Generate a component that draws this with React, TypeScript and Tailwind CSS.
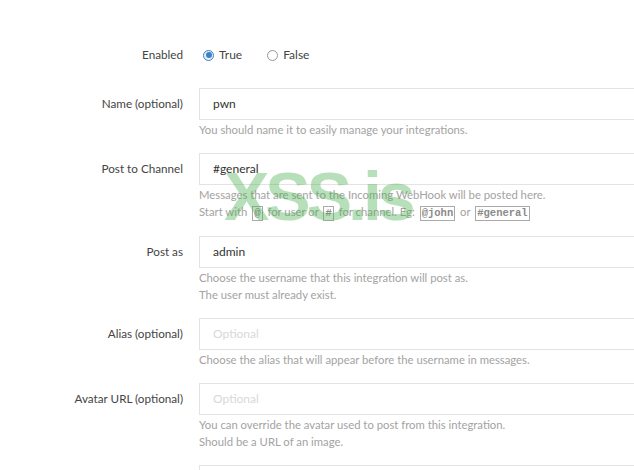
import React from 'react'

const font = { fontFamily: 'Lato, "Noto Sans", sans-serif' }

const Code = ({ children }: { children: React.ReactNode }) => (
    <code className="mx-[2px] inline-block border border-[#aaa] px-[1px] align-middle text-[10.5px] leading-[13px] font-bold text-[#8a8a8a] font-['Liberation_Mono',monospace]">
        {children}
    </code>
)

const Row = ({ label, children }: { label: string; children: React.ReactNode }) => (
    <div className="flex">
        <div className="w-[183px] shrink-0 pt-[6px] text-right text-[11.7px] leading-[18px] text-[#444]">{label}</div>
        <div className="ml-[16px] w-[480px] shrink-0">{children}</div>
    </div>
)

const Input = ({ value, placeholder }: { value?: string; placeholder?: string }) => (
    <div className="flex h-[32px] items-center border border-[#e3e3e3] bg-white pl-[13px] text-[12px]">
        {value ? <span className="text-[#333]">{value}</span> : <span className="text-[#d8d8d8]">{placeholder}</span>}
    </div>
)

const Help = ({ children }: { children: React.ReactNode }) => (
    <div className="mt-[1px] text-[11.3px] leading-[17px] text-[#a3a3a3]">{children}</div>
)

const Radio = ({ checked, label }: { checked?: boolean; label: string }) => (
    <label className="flex items-center gap-[5px] text-[12px] text-[#444]">
        <span
            className={`flex h-[11px] w-[11px] items-center justify-center rounded-full border ${checked ? 'border-[#3d7fc4] bg-[#e8f0fa]' : 'border-[#999]'}`}
        >
            {checked ? <span className="h-[6px] w-[6px] rounded-full bg-[#3d7fc4]" /> : null}
        </span>
        {label}
    </label>
)

export default function App() {
    return (
        <div className="relative h-[470px] w-[634px] overflow-hidden bg-white" style={font}>
            <div className="pt-[45px]">
                <div className="flex h-[20px] items-center">
                    <div className="w-[183px] text-right text-[11.7px] text-[#444]">Enabled</div>
                    <div className="ml-[20px] flex gap-[25px]">
                        <Radio checked label="True" />
                        <Radio label="False" />
                    </div>
                </div>

                <div className="mt-[23px] flex flex-col gap-[15px]">
                    <Row label="Name (optional)">
                        <Input value="pwn" />
                        <Help>You should name it to easily manage your integrations.</Help>
                    </Row>

                    <Row label="Post to Channel">
                        <Input value="#general" />
                        <Help>
                            Messages that are sent to the Incoming WebHook will be posted here.
                            <br />
                            Start with <Code>@</Code> for user or <Code>#</Code> for channel. Eg: <Code>@john</Code> or <Code>#general</Code>
                        </Help>
                    </Row>

                    <Row label="Post as">
                        <Input value="admin" />
                        <Help>
                            Choose the username that this integration will post as.
                            <br />
                            The user must already exist.
                        </Help>
                    </Row>

                    <Row label="Alias (optional)">
                        <Input placeholder="Optional" />
                        <Help>Choose the alias that will appear before the username in messages.</Help>
                    </Row>

                    <Row label="Avatar URL (optional)">
                        <Input placeholder="Optional" />
                        <Help>
                            You can override the avatar used to post from this integration.
                            <br />
                            Should be a URL of an image.
                        </Help>
                    </Row>

                    <Row label="">
                        <Input />
                    </Row>
                </div>
            </div>

            {/* watermark */}
            <div className="pointer-events-none absolute left-[224px] top-[156px] text-[68px] leading-[80px] font-bold tracking-[-4px] text-[#4caf50]/40 font-['Liberation_Sans',sans-serif]">
                XSS.is
            </div>
        </div>
    )
}
